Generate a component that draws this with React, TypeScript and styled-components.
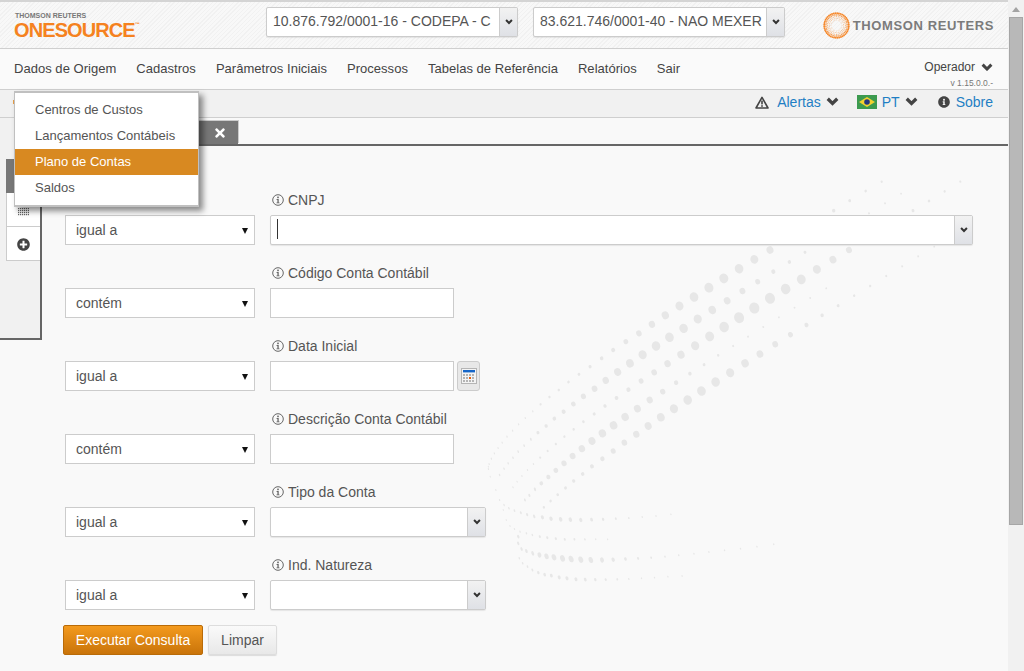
import React from "react";
import styled, { createGlobalStyle } from "styled-components";
import { FaInfoCircle, FaPlusCircle, FaTimes } from "react-icons/fa";

const Global = createGlobalStyle`
  html, body { margin: 0; padding: 0; height: 671px; overflow: hidden; background: #f9f9f9; }
  * { box-sizing: border-box; }
  body { font-family: "Liberation Sans", Arial, sans-serif; font-size: 14px; color: #555; }
`;

const Window = styled.div`
  display: flex;
  width: 1024px;
  height: 671px;
  overflow: hidden;
`;

const Page = styled.div`
  position: relative;
  display: flex;
  flex-direction: column;
  width: 1008px;
  height: 671px;
  background: #f9f9f9;
`;

const Scrollbar = styled.div`
  display: flex;
  flex-direction: column;
  align-items: center;
  width: 16px;
  height: 671px;
  background: #f1f1f1;
`;

const ScrollUp = styled.div`
  width: 0;
  height: 0;
  margin: 7px 0 5px;
  border-left: 4px solid transparent;
  border-right: 4px solid transparent;
  border-bottom: 5px solid #a3a3a3;
`;

const ScrollThumb = styled.div`
  width: 14px;
  height: 508px;
  background: #b8b8b8;
  border: 1px solid #a6a6a6;
`;

const TopBar = styled.header`
  display: flex;
  align-items: center;
  height: 49px;
  padding: 0 14px;
  border-top: 2px solid #d4d4d4;
  border-bottom: 1px solid #cfcfcf;
  background:
    repeating-linear-gradient(135deg, rgba(0, 0, 0, 0.028) 0 1px, transparent 1px 3px),
    linear-gradient(90deg, #f8f8f8, #f8f8f8);
`;

const Brand = styled.div`
  display: flex;
  flex-direction: column;
  width: 252px;
  margin-top: 3px;
`;

const BrandTop = styled.span`
  font-size: 7px;
  font-weight: 700;
  line-height: 8px;
  color: #777;
  margin-left: 1px;
`;

const BrandName = styled.span`
  font-size: 20px;
  font-weight: 700;
  line-height: 21px;
  letter-spacing: -0.9px;
  color: #f58220;
  sup {
    font-size: 5px;
    line-height: 0;
    vertical-align: 11px;
    letter-spacing: 0;
  }
`;

const Combo = styled.div<{ $width: string }>`
  display: flex;
  width: ${(p) => p.$width};
  height: 30px;
  background: #fff;
  border: 1px solid #ccc;
  border-radius: 2px;
  box-shadow: 0 1px 1px rgba(0, 0, 0, 0.08);
`;

const ComboText = styled.div`
  flex: 1;
  overflow: hidden;
  padding: 0 6px;
  white-space: nowrap;
  line-height: 26px;
  font-size: 14px;
  color: #555;
  min-width: 0;
`;

const ComboButton = styled.div`
  display: flex;
  align-items: center;
  justify-content: center;
  width: 18px;
  flex: none;
  border-left: 1px solid #ccc;
  background: linear-gradient(#f2f2f2, #dfe1e6);
`;

const Selects = styled.div`
  display: flex;
  gap: 15px;
  margin-top: -6px;
`;

const TrBrand = styled.div`
  display: flex;
  align-items: center;
  gap: 3px;
  margin-left: auto;
`;

const TrText = styled.span`
  font-size: 13px;
  font-weight: 700;
  letter-spacing: 0.6px;
  color: #7b7b7b;
`;

const NavBar = styled.nav`
  display: flex;
  align-items: center;
  gap: 20px;
  height: 41px;
  padding: 0 15px 1px 14px;
  background: #fafafa;
  border-bottom: 1px solid #cfcfcf;
`;

const NavItem = styled.span`
  font-size: 13px;
  letter-spacing: 0.03px;
  color: #444;
  white-space: nowrap;
`;

const UserBox = styled.div`
  display: flex;
  flex-direction: column;
  align-items: flex-end;
  margin-left: auto;
  padding-top: 10px;
`;

const UserName = styled.span`
  display: flex;
  align-items: center;
  gap: 6px;
  font-size: 12px;
  line-height: 16px;
  color: #444;
`;

const Version = styled.span`
  margin-top: 3px;
  font-size: 8.5px;
  line-height: 10px;
  color: #777;
`;

const SubBar = styled.div`
  display: flex;
  align-items: center;
  height: 28px;
  padding: 0 15px 3px 0;
  background: #f1f1f1;
  border-bottom: 1px solid #cfcfcf;
`;

const Crumb = styled.span`
  width: 1px;
  height: 4px;
  margin: 0 auto 0 13px;
  background: #e9a04a;
`;

const SubGroup = styled.span<{ $gap?: number; $ml?: number }>`
  display: flex;
  align-items: center;
  gap: ${(p) => p.$gap ?? 5}px;
  margin-left: ${(p) => p.$ml ?? 0}px;
  svg { color: #444; flex: none; }
`;

const SubLink = styled.span`
  font-size: 14px;
  color: #1f7fc4;
`;

const Body = styled.div`
  position: relative;
  display: flex;
  flex: 1;
  min-height: 0;
`;

const Decoration = styled.svg`
  position: absolute;
  left: 0;
  top: -118px;
  width: 1008px;
  height: 671px;
  pointer-events: none;
`;

const SidePanel = styled.aside`
  position: relative;
  flex: none;
  width: 42px;
  height: 222px;
  padding: 41px 0 0 6px;
  background: #f1f1f1;
  border-right: 2px solid #666;
  border-bottom: 2px solid #666;
`;

const SideHead = styled.div`
  height: 34px;
  background: #777;
`;

const SideButton = styled.div`
  display: flex;
  align-items: center;
  justify-content: center;
  height: 34px;
  padding-top: 2px;
  background: #fff;
  border: solid #ccc;
  border-width: 0 0 1px 1px;
  color: #444;
  font-size: 13px;
`;

const Main = styled.main`
  position: relative;
  flex: 1;
  min-width: 0;
`;

const TabBar = styled.div`
  display: flex;
  align-items: flex-end;
  height: 28px;
  border-bottom: 2px solid #666;
`;

const Tab = styled.div`
  display: flex;
  align-items: center;
  justify-content: flex-end;
  width: 139px;
  height: 23px;
  margin-left: 57px;
  padding: 0 11px 0 0;
  background: #777;
  color: #fff;
  font-size: 14px;
  box-shadow: 1px -1px 0 #ccc;
`;

const Form = styled.form`
  padding: 45px 35px 0 23px;
`;

const Row = styled.div`
  display: grid;
  grid-template-columns: 190px 1fr;
  column-gap: 15px;
  align-items: end;
  margin-bottom: 19px;
`;

const Operator = styled.div`
  position: relative;
  height: 30px;
  padding-left: 10px;
  line-height: 28px;
  font-size: 14px;
  color: #555;
  background: #fff;
  border: 1px solid #ccc;
  &::after {
    content: "";
    position: absolute;
    right: 6px;
    top: 12px;
    border-left: 3.5px solid transparent;
    border-right: 3.5px solid transparent;
    border-top: 6px solid #111;
  }
`;

const Field = styled.div`
  display: flex;
  flex-direction: column;
  gap: 6px;
`;

const FieldLabel = styled.label`
  display: flex;
  align-items: center;
  gap: 4px;
  height: 18px;
  padding-left: 2px;
  font-size: 14px;
  color: #555;
`;

const Line = styled.div`
  display: flex;
  gap: 3px;
`;

const TextBox = styled.input`
  width: 184px;
  height: 30px;
  background: #fff;
  border: 1px solid #ccc;
  outline: none;
`;

const CalendarButton = styled.button`
  display: flex;
  align-items: center;
  justify-content: center;
  width: 23px;
  height: 30px;
  padding: 0;
  background: #e8e8e8;
  border: 1px solid #ccc;
  border-radius: 3px;
`;

const Caret = styled.div`
  position: relative;
  flex: 1;
  &::before {
    content: "";
    position: absolute;
    left: 6px;
    top: 3px;
    width: 1px;
    height: 20px;
    background: #333;
  }
`;

const Buttons = styled.div`
  display: flex;
  gap: 5px;
  margin: -4px 0 0 -2px;
`;

const Primary = styled.button`
  width: 140px;
  height: 30px;
  padding: 0;
  font: 14px "Liberation Sans", Arial, sans-serif;
  color: #fff;
  background: linear-gradient(#f39a1e, #c9740a);
  border: 1px solid #b96b08;
  border-radius: 2px;
`;

const Secondary = styled.button`
  width: 69px;
  height: 30px;
  padding: 0;
  font: 14px "Liberation Sans", Arial, sans-serif;
  color: #555;
  background: linear-gradient(#fafafa, #e8e8e8);
  border: 1px solid #ddd;
  border-radius: 2px;
  box-shadow: 0 1px 1px rgba(0, 0, 0, 0.12);
`;

const Menu = styled.ul`
  position: absolute;
  z-index: 5;
  left: 14px;
  top: 91px;
  width: 185px;
  margin: 0;
  padding: 4px 0;
  list-style: none;
  background: #fff;
  border: solid #c0c0c0;
  border-width: 2px 1px;
  box-shadow: 4px 4px 6px rgba(0, 0, 0, 0.45);
`;

const MenuItem = styled.li<{ $active?: boolean }>`
  height: 26px;
  padding-left: 20px;
  line-height: 25px;
  font-size: 13px;
  color: ${(p) => (p.$active ? "#fff" : "#555")};
  background: ${(p) => (p.$active ? "#d88921" : "transparent")};
`;

/* ---------- drawings ---------- */

const toX = (z: number) => 440 + z / 2.685;
const toY = (z: number) => 170 + z / 3;

type Band = { peak: number; max: number; min: number; spread: number; pts: number[] };

const bands: Band[] = [
  { peak: 740, max: 5, min: 1.1, spread: 350, pts: [1186,35,1143,63,1100,92,1057,122,886,240,844,268,803,296,762,325,722,353,682,381,643,408,605,436,569,463,534,490,499,515,465,540,434,565,403,590,373,613,345,636,319,660,294,681,270,703,249,724,229,744,211,763,195,782,180,800,167,818,156,834,146,850,138,866,132,882,130,897] },
  { peak: 616, max: 4.8, min: 1, spread: 380, pts: [1238,71,1195,100,1152,130,980,247,938,276,895,305,853,335,812,363,771,392,731,420,692,447,654,475,616,502,580,528,544,554,510,580,477,606,445,631,415,656,385,679,358,702,332,725,307,746,285,768,263,788,244,808,226,827,210,845,196,863,183,880,172,896,160,915] },
  { peak: 844, max: 5.6, min: 1, spread: 430, pts: [1397,35,1355,64,1313,93,1270,122,1098,240,1055,269,1012,298,970,328,928,357,886,385,844,414,803,443,763,471,724,499,685,527,647,554,611,581,575,607,540,633,506,659,474,684,443,708,414,732,385,755,359,778,334,800,311,822,289,843,269,863,251,882,235,900,220,918,207,935,196,952] },
  { peak: 702, max: 4.8, min: 1, spread: 380, pts: [1327,230,1284,259,1241,289,1198,318,1155,348,1112,377,1069,407,1026,436,984,465,941,494,900,523,859,552,819,580,779,608,740,636,702,663,665,690,628,716,593,742,559,768,527,793,495,818,465,843,436,866,408,889,383,912,359,933,337,954,316,974,297,993,279,1012] },
  { peak: 466, max: 4.2, min: 1, spread: 260, pts: [1037,355,994,384,952,413,910,442,868,471,827,500,787,528,747,556,709,584,671,611,634,638,598,665,563,690,530,716,497,741,466,766,436,790,408,813,381,836,356,858,333,880,311,901,291,921,272,940,255,958,240,976,228,990] },
  { peak: 330, max: 2.4, min: 0.9, spread: 180, pts: [620,1033,580,1038,543,1041,507,1044,472,1046,438,1048,407,1049,378,1050,350,1049,324,1048,298,1046,275,1042,253,1039,234,1034,217,1028,200,1022,185,1015,172,1005,160,990,150,960,135,920,130,890] },
  { peak: 300, max: 1.5, min: 0.8, spread: 150, pts: [450,1108,418,1108,389,1108,361,1108,335,1108,311,1106,288,1103,268,1100,248,1095,232,1090,215,1085,200,1077,188,1068,178,1050,170,1020] },
  { peak: 352, max: 3.4, min: 1, spread: 200, pts: [896,1123,851,1130,807,1136,764,1141,722,1146,682,1151,641,1156,604,1160,567,1163,532,1165,498,1167,465,1169,435,1170,405,1170,378,1169,352,1167,329,1165,306,1162,286,1159,267,1155,249,1150,232,1143,219,1137,210,1120,210,1100] },
  { peak: 340, max: 2.1, min: 0.9, spread: 170, pts: [650,1218,612,1220,576,1223,541,1225,507,1227,476,1228,445,1229,417,1229,390,1229,365,1228,341,1225,320,1222,299,1217,281,1214,264,1208,248,1200,235,1190,222,1180,213,1165] },
];

const dots = bands.flatMap((b, bi) => {
  const out: { x: number; y: number; r: number; k: number; id: string }[] = [];
  for (let i = 0; i < b.pts.length; i += 2) {
    const zx = b.pts[i];
    const d = (zx - b.peak) / b.spread;
    const r = b.min + (b.max - b.min) * Math.exp(-d * d * 2);
    out.push({ x: toX(zx), y: toY(b.pts[i + 1]), r, k: zx < 260 ? 0.55 : bi > 4 ? 0.7 : 0.9, id: `${bi}-${i}` });
  }
  return out;
});

const logoDots = (() => {
  const out: { x: number; y: number; r: number; o: number; id: string }[] = [];
  [5.5, 7.2, 8.9, 10.6, 12.3].forEach((rad, ri) => {
    const n = Math.round(rad * 3.6);
    for (let i = 0; i < n; i++) {
      const a = (i / n) * Math.PI * 2 + ri * 0.3;
      out.push({
        x: 13.5 + rad * Math.cos(a),
        y: 13.5 + rad * Math.sin(a),
        r: [0.45, 0.5, 0.55, 0.75, 0.95][ri],
        o: [0.4, 0.5, 0.6, 0.8, 0.95][ri],
        id: `${ri}-${i}`,
      });
    }
  });
  return out;
})();

const TrLogo = () => (
  <svg width="27" height="27" viewBox="0 0 27 27">
    {logoDots.map((d) => (
      <circle key={d.id} cx={d.x} cy={d.y} r={d.r} fill="#f58220" opacity={d.o} />
    ))}
  </svg>
);

const Chevron = ({ w = 12, color = "#444" }: { w?: number; color?: string }) => (
  <svg width={w} height={w * 0.7} viewBox="0 0 12 8.4">
    <path d="M1.6 1.6 6 6 10.4 1.6" fill="none" stroke={color} strokeWidth="3" />
  </svg>
);

const WarningIcon = () => (
  <svg width="14" height="13" viewBox="0 0 14 13">
    <path d="M7 1.4 13 12H1z" fill="none" stroke="#444" strokeWidth="1.6" strokeLinejoin="round" />
    <rect x="6.2" y="4.6" width="1.6" height="3.8" fill="#444" />
    <rect x="6.2" y="9.2" width="1.6" height="1.6" fill="#444" />
  </svg>
);

const InfoOutline = () => (
  <svg width="12" height="12" viewBox="0 0 12 12">
    <circle cx="6" cy="6" r="5.3" fill="none" stroke="#666" strokeWidth="1" />
    <rect x="5.2" y="2.6" width="1.6" height="1.6" fill="#666" />
    <path d="M4.6 5h2.1v3.4h.8v.9H4.5v-.9h.9V5.9h-.8z" fill="#666" />
  </svg>
);

const Flag = () => (
  <svg width="20" height="14" viewBox="0 0 20 14">
    <rect width="20" height="14" fill="#3c9a4f" />
    <path d="M10 2 18 7 10 12 2 7z" fill="#f2d22e" />
    <circle cx="10" cy="7" r="2.8" fill="#23377f" />
  </svg>
);

const CalendarIcon = () => (
  <svg width="16" height="16" viewBox="0 0 16 16">
    <rect x=".5" y=".5" width="15" height="15" fill="#f4f4f4" stroke="#b5b5b5" />
    <rect x="2" y="2" width="12" height="2.4" fill="#1666c8" />
    {[6, 9, 12].flatMap((y) =>
      [2, 5, 8, 11].map((x) => (
        <rect key={`${x}-${y}`} x={x} y={y} width="2" height="2" fill={x === 8 && y === 9 ? "#e8620e" : "#b4b4b4"} />
      ))
    )}
  </svg>
);

const TableIcon = () => (
  <svg width="11" height="11" viewBox="0 0 11 11">
    <rect width="11" height="2" fill="#333" />
    {[3, 5, 7, 9].flatMap((y) =>
      [0, 2, 4, 6, 8, 10].map((x) => <rect key={`${x}-${y}`} x={x} y={y} width="1.2" height="1.2" fill="#666" />)
    )}
  </svg>
);

const fields = [
  { op: "igual a", label: "CNPJ", kind: "wide" },
  { op: "contém", label: "Código Conta Contábil", kind: "text" },
  { op: "igual a", label: "Data Inicial", kind: "date" },
  { op: "contém", label: "Descrição Conta Contábil", kind: "text" },
  { op: "igual a", label: "Tipo da Conta", kind: "combo" },
  { op: "igual a", label: "Ind. Natureza", kind: "combo" },
];

const ComboChevron = () => (
  <ComboButton>
    <Chevron w={8} color="#333" />
  </ComboButton>
);

export default function App() {
  return (
    <Window>
      <Global />
      <Page>
        <TopBar>
          <Brand>
            <BrandTop>THOMSON REUTERS</BrandTop>
            <BrandName>
              ONESOURCE<sup>™</sup>
            </BrandName>
          </Brand>
          <Selects>
            <Combo $width="252px">
              <ComboText>10.876.792/0001-16 - CODEPA - C</ComboText>
              <ComboChevron />
            </Combo>
            <Combo $width="252px">
              <ComboText>83.621.746/0001-40 - NAO MEXER</ComboText>
              <ComboChevron />
            </Combo>
          </Selects>
          <TrBrand>
            <TrLogo />
            <TrText>THOMSON REUTERS</TrText>
          </TrBrand>
        </TopBar>

        <NavBar>
          {["Dados de Origem", "Cadastros", "Parâmetros Iniciais", "Processos", "Tabelas de Referência", "Relatórios", "Sair"].map((n) => (
            <NavItem key={n}>{n}</NavItem>
          ))}
          <UserBox>
            <UserName>
              Operador <Chevron />
            </UserName>
            <Version>v 1.15.0.0.-</Version>
          </UserBox>
        </NavBar>

        <SubBar>
          <Crumb />
          <SubGroup $gap={6}>
            <WarningIcon />
            <SubGroup $gap={5} $ml={2}>
              <SubLink>Alertas</SubLink>
              <Chevron w={13} />
            </SubGroup>
          </SubGroup>
          <SubGroup $ml={18}>
            <Flag />
            <SubLink>PT</SubLink>
            <Chevron w={13} />
          </SubGroup>
          <SubGroup $ml={20} $gap={6}>
            <FaInfoCircle size={12} />
            <SubLink>Sobre</SubLink>
          </SubGroup>
        </SubBar>

        <Body>
          <Decoration viewBox="0 0 1008 671">
            {dots.map((d) => (
              <ellipse
                key={d.id}
                cx={d.x}
                cy={d.y}
                rx={d.r * d.k}
                ry={d.r}
                fill="#e7e7e7"
                transform={`rotate(-20 ${d.x} ${d.y})`}
              />
            ))}
          </Decoration>
          <SidePanel>
            <SideHead />
            <SideButton>
              <TableIcon />
            </SideButton>
            <SideButton>
              <FaPlusCircle />
            </SideButton>
          </SidePanel>
          <Main>
            <TabBar>
              <Tab>
                <FaTimes />
              </Tab>
            </TabBar>
            <Form>
              {fields.map((f) => (
                <Row key={f.label}>
                  <Operator>{f.op}</Operator>
                  <Field>
                    <FieldLabel>
                      <InfoOutline />
                      {f.label}
                    </FieldLabel>
                    {f.kind === "wide" && (
                      <Combo $width="703px">
                        <Caret />
                        <ComboChevron />
                      </Combo>
                    )}
                    {f.kind === "text" && <TextBox />}
                    {f.kind === "date" && (
                      <Line>
                        <TextBox />
                        <CalendarButton type="button">
                          <CalendarIcon />
                        </CalendarButton>
                      </Line>
                    )}
                    {f.kind === "combo" && (
                      <Combo $width="216px">
                        <ComboText />
                        <ComboChevron />
                      </Combo>
                    )}
                  </Field>
                </Row>
              ))}
              <Buttons>
                <Primary type="button">Executar Consulta</Primary>
                <Secondary type="button">Limpar</Secondary>
              </Buttons>
            </Form>
          </Main>
        </Body>

        <Menu>
          <MenuItem>Centros de Custos</MenuItem>
          <MenuItem>Lançamentos Contábeis</MenuItem>
          <MenuItem $active>Plano de Contas</MenuItem>
          <MenuItem>Saldos</MenuItem>
        </Menu>
      </Page>
      <Scrollbar>
        <ScrollUp />
        <ScrollThumb />
      </Scrollbar>
    </Window>
  );
}
